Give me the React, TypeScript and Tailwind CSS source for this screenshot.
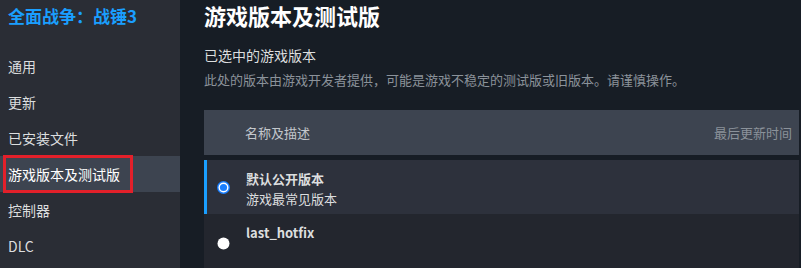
import React from "react";

const font = { fontFamily: '"Noto Sans CJK SC", "Noto Sans", sans-serif' };

function Radio({ on }: { on: boolean }) {
  return (
    <svg width="13" height="13" viewBox="0 0 13 13" className="shrink-0">
      {on ? (
        <>
          <circle cx="6.5" cy="6.5" r="6.5" fill="#1a7fff" />
          <circle cx="6.5" cy="6.5" r="5" fill="#ffffff" />
          <circle cx="6.5" cy="6.5" r="3.6" fill="#1a7fff" />
        </>
      ) : (
        <circle cx="6.5" cy="6.5" r="6" fill="#ffffff" />
      )}
    </svg>
  );
}

export default function App() {
  const items = ["通用", "更新", "已安装文件", "游戏版本及测试版", "控制器", "DLC"];
  return (
    <div
      className="flex w-[801px] h-[268px] overflow-hidden bg-[#171d25]"
      style={font}
    >
      <div className="w-[180px] shrink-0 bg-[#2a2d35] flex flex-col">
        <div className="h-[48px] pl-[8px] pt-[4px] leading-[24px] text-[17px] font-bold text-[#1a9fff]">
          全面战争：战锤3
        </div>
        {items.map((t, i) => {
          const sel = i === 3;
          return (
            <div
              key={t}
              className={
                "relative h-[36px] flex items-center pl-[8px] text-[14px] leading-none " +
                (sel ? "bg-[#3d4450] text-white" : "text-[#dcdedf]")
              }
            >
              {t}
              {sel && (
                <div className="absolute left-[3px] top-[-1px] w-[130px] h-[38px] border-[3px] border-[#e3202a]" />
              )}
            </div>
          );
        })}
      </div>
      <div className="flex-1 pl-[24px] pr-[2px] flex flex-col leading-none">
        <div className="h-[30px] shrink-0 pt-[1px] leading-[28px] text-[22px] font-bold text-white">
          游戏版本及测试版
        </div>
        <div className="mt-[18px] text-[14px] text-[#dcdedf]">已选中的游戏版本</div>
        <div className="mt-[11px] text-[13px] text-[#8b929a]">
          此处的版本由游戏开发者提供，可能是游戏不稳定的测试版或旧版本。请谨慎操作。
        </div>
        <div className="mt-[24px] h-[45px] shrink-0 bg-[#3d4450] flex items-center justify-between pl-[41px] pr-[7px] text-[13px]">
          <span className="text-[#c3c7cc]">名称及描述</span>
          <span className="text-[#8b929a]">最后更新时间</span>
        </div>
        <div className="mt-[5px] h-[54px] shrink-0 bg-[#2d313c] border-l-[3px] border-[#1a9fff] flex items-center pl-[10px]">
          <Radio on={true} />
          <div className="ml-[16px] mt-[2px] flex flex-col gap-[7px] text-[13px] text-[#dcdedf]">
            <span className="font-bold">默认公开版本</span>
            <span>游戏最常见版本</span>
          </div>
        </div>
        <div className="flex-1 bg-[#23262e] flex items-start pl-[13px]">
          <div className="mt-[23px]">
            <Radio on={false} />
          </div>
          <div className="ml-[16px] mt-[12px] text-[13px] font-bold text-[#dcdedf]">last_hotfix</div>
        </div>
      </div>
    </div>
  );
}
